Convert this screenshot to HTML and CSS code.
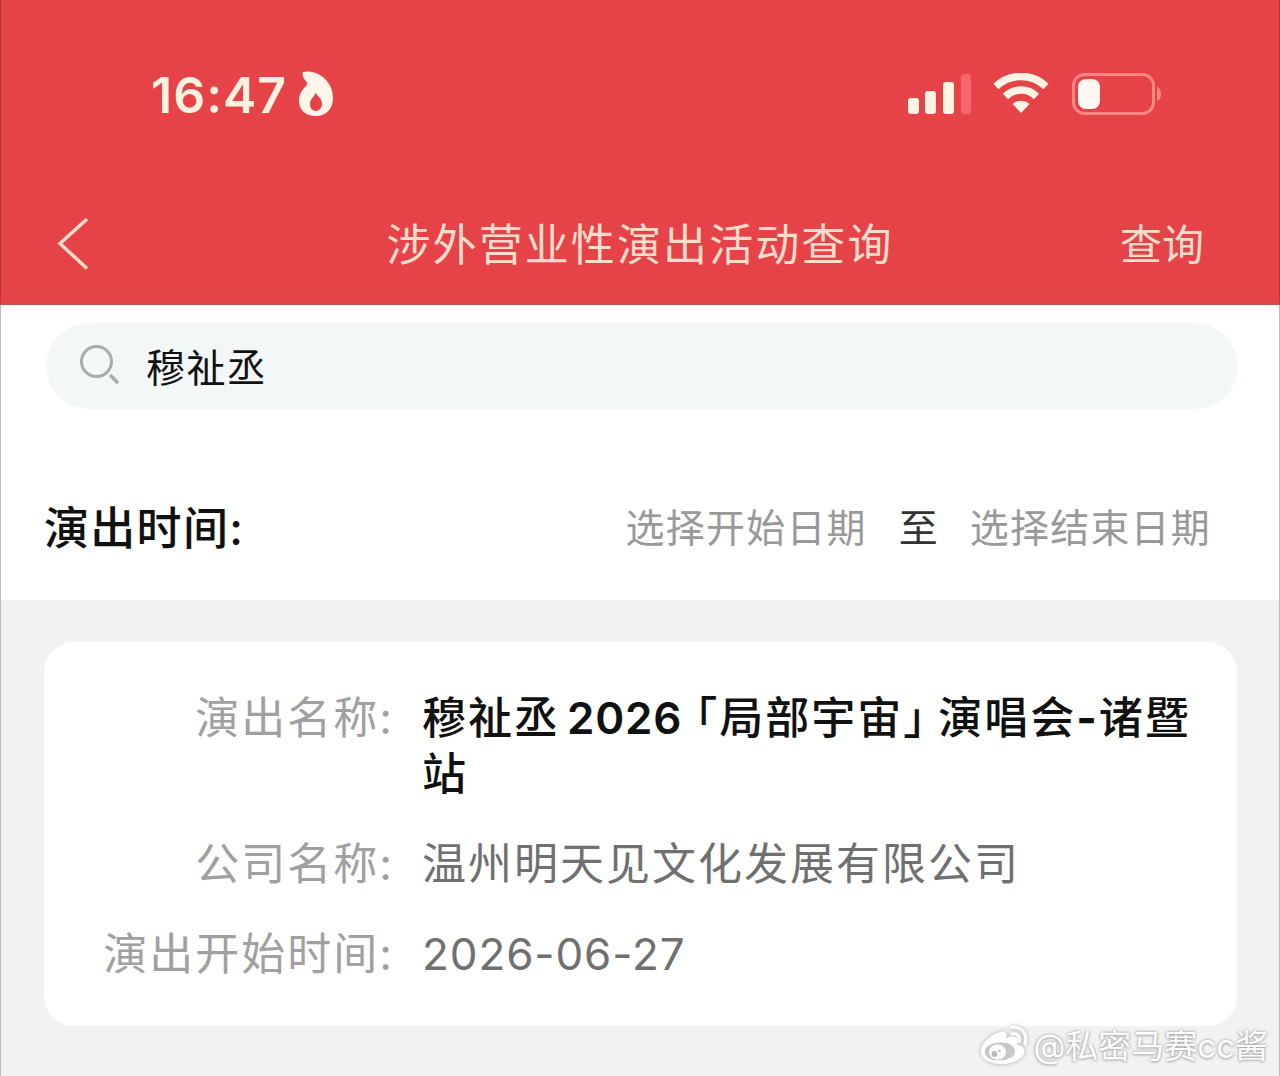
FILE: index.html
```html
<!DOCTYPE html>
<html lang="zh-CN">
<head>
    <meta charset="UTF-8">
    <meta name="viewport" content="width=device-width, initial-scale=1.0">
    <title>涉外营业性演出活动查询</title>
    <link rel="stylesheet" href="styles.css">
</head>
<body>

    <div class="page">
        <header class="header">
            <!-- Phone status bar -->
            <div class="status-bar">
                <div class="clock">
                    <span class="time">16:47</span>
                    <svg class="flame" width="38" height="48" viewBox="0 0 38 48">
                        <path fill="#fff6ea" fill-rule="evenodd" d="M6 2C18-1 36 9 36 28c0 11-7 18-17 18S2 40 2 31c0-7 3-11 7-15 2-2 1-4-1-6-2-3-3-5-2-8zM19 22c-1 4-6 7-6 12s3 7 6 7 6-3 6-7-2-6-4-8c-1-1-2-2-2-4z"/>
                    </svg>
                </div>
                <div class="indicators">
                    <svg class="signal" width="66" height="44" viewBox="0 0 66 44">
                        <g fill="#fff3e4">
                            <rect x="2" y="26" width="11" height="16" rx="3"/>
                            <rect x="19" y="19" width="11" height="23" rx="3"/>
                            <rect x="37" y="10" width="11" height="32" rx="3"/>
                        </g>
                        <rect x="55" y="2" width="10" height="40" rx="3" fill="#f8646b"/>
                    </svg>
                    <svg class="wifi" width="58" height="42" viewBox="0 0 58 42">
                        <g fill="none" stroke="#fff3e4" stroke-width="7.5">
                            <path d="M4 13.5a36 36 0 0 1 50 0"/>
                            <path d="M13.500 23.500a22 22 0 0 1 31 0"/>
                        </g>
                        <path fill="#fff3e4" d="M20.500 31a12.500 12.500 0 0 1 17 0L29 40z"/>
                    </svg>
                    <svg class="battery" width="92" height="44" viewBox="0 0 92 44">
                        <rect x="2.500" y="2.500" width="80" height="39" rx="11" fill="none" stroke="#fa8984" stroke-width="3"/>
                        <rect x="7" y="7" width="22" height="30" rx="8" fill="#fff8f2"/>
                        <path fill="#fa8984" d="M86 15c3 1 4 4 4 7s-1 6-4 7z"/>
                    </svg>
                </div>
            </div>

            <nav class="nav-bar">
                <svg class="back" width="34" height="56" viewBox="0 0 34 56">
                    <path d="M31 3L4 27.500l27 25" fill="none" stroke="#ffdccb" stroke-width="3.500"/>
                </svg>
                <h1>涉外营业性演出活动查询</h1>
                <span class="nav-action">查询</span>
            </nav>
        </header>

        <!-- Search and date filter -->
        <section class="filters">
            <div class="search-box">
                <svg width="42" height="42" viewBox="0 0 42 42" fill="none" stroke="#a9acac" stroke-width="3">
                    <circle cx="17.500" cy="17.500" r="15"/>
                    <path d="M31 31l8 8" stroke-width="3.500"/>
                </svg>
                <span>穆祉丞</span>
            </div>
            <div class="date-row">
                <span class="date-label">演出时间:</span>
                <div class="date-range">
                    <span>选择开始日期</span>
                    <span class="date-to">至</span>
                    <span>选择结束日期</span>
                </div>
            </div>
        </section>

        <!-- Result card -->
        <main class="results">
            <div class="card">
                <div class="label">演出名称:</div>
                <div class="value name"><span>穆祉丞</span><span class="year">2026</span><span class="bracket">「</span><span>局部宇宙</span><span class="bracket close">」</span><span>演唱会<b>-</b>诸暨</span><br><span>站</span></div>
                <div class="label">公司名称:</div>
                <div class="value">温州明天见文化发展有限公司</div>
                <div class="label">演出开始时间:</div>
                <div class="value date">2026-06-27</div>
            </div>
        </main>

        <div class="watermark">
            <svg width="50" height="42" viewBox="0 0 50 42">
                <path fill="#fff" fill-rule="evenodd" d="M21 7c4-2 7 1 5 6 6-3 13-2 12 3-1 3-1 3 1 4 12 4 4 19-18 19C8 39 0 33 1 25 2 17 13 8 21 7zM20 18c-9 0-15 4-15 9s6 9 15 8 15-5 14-10-6-8-14-7z"/>
                <ellipse cx="20" cy="26.500" rx="15" ry="9" fill="#c8c8c8"/>
                <ellipse cx="17.500" cy="27" rx="8.500" ry="7.500" fill="#fff"/>
                <circle cx="14.500" cy="29" r="3" fill="#bbb"/>
                <circle cx="19.500" cy="26" r="1.300" fill="#bbb"/>
                <path d="M32 9c5-1 9 3 7 8M31 2c10-1 17 6 14 17" fill="none" stroke="#fff" stroke-width="3" stroke-linecap="round"/>
            </svg>
            <span>@私密马赛cc酱</span>
        </div>
    </div>

</body>
</html>
```
FILE: styles.css
```css
/* General page styles */
* {
    box-sizing: border-box;
}

body {
    margin: 0;
    font-family: Inter, "Noto Sans CJK SC", sans-serif;
    background: #f2f2f2;
}

.page {
    position: relative;
    width: 1280px;
    height: 1076px;
    overflow: hidden;
    display: flex;
    flex-direction: column;
    box-shadow: inset 1px 0 #bdbdbd, inset -1px 0 #bdbdbd;
}

svg {
    display: block;
    flex: none;
}

/* Red header */
.header {
    height: 305px;
    padding: 64px 76px 0 56px;
    background: #e54348;
    border-bottom: 2px solid #b9565a;
    box-shadow: inset 1px 0 #b73539, inset -1px 0 #b73539;
}

.status-bar {
    height: 60px;
    padding: 0 41px 0 95px;
    display: flex;
    justify-content: space-between;
    align-items: center;
}

.clock,
.indicators {
    display: flex;
    align-items: center;
}

.time {
    padding-top: 2px;
    color: #fff0df;
    font-size: 50px;
    font-weight: 600;
    letter-spacing: 1px;
    line-height: 60px;
}

.flame {
    margin-left: 10px;
}

.wifi {
    margin-left: 20px;
}

.battery {
    margin-left: 21px;
}

.nav-bar {
    height: 60px;
    margin-top: 90px;
    display: flex;
    justify-content: space-between;
    align-items: center;
    color: #ffdccb;
}

.nav-bar h1 {
    margin: 2px 0 0 70px;
    font-size: 44px;
    font-weight: 400;
    letter-spacing: 2.1px;
    line-height: 60px;
}

.nav-action {
    padding-top: 2px;
    font-size: 42px;
    line-height: 60px;
}

/* Filters */
.filters {
    height: 295px;
    padding: 18px 42px 0 46px;
    background: #fff;
    box-shadow: inset 1px 0 #bdbdbd, inset -1px 0 #bdbdbd;
}

.search-box {
    height: 86px;
    padding: 0 0 2px 33px;
    border-radius: 43px;
    background: #f4f7f8;
    display: flex;
    align-items: center;
    gap: 25px;
    color: #111;
    font-size: 39px;
    letter-spacing: 1.4px;
}

.date-row {
    margin: 86px 0 0 -2px;
    padding-right: 27px;
    height: 60px;
    display: flex;
    justify-content: space-between;
    align-items: center;
}

.date-label {
    color: #111;
    font-size: 45px;
    font-weight: 500;
    letter-spacing: 1.3px;
}

.date-range {
    display: flex;
    gap: 32px;
    color: #999;
    font-size: 39px;
    letter-spacing: 1.2px;
}

.date-to {
    color: #333;
    letter-spacing: 0;
}

/* Results */
.results {
    padding: 42px 43px 0 44px;
}

.card {
    height: 384px;
    padding: 48px 40px 0 56px;
    border-radius: 30px;
    background: #fff;
    display: grid;
    grid-template-columns: 294px 1fr;
    align-content: start;
    column-gap: 28px;
    row-gap: 34px;
    font-size: 44px;
    letter-spacing: 2px;
    line-height: 56px;
}

.label {
    color: #a0a0a0;
    text-align: right;
}

.value {
    color: #707070;
}

.name {
    color: #111;
    font-weight: 500;
}

.year {
    margin: 0 13px 0 7px;
    font-weight: 600;
    letter-spacing: 0.8px;
}

.bracket {
    font-feature-settings: "halt";
}

.close {
    margin-right: 11px;
}

.date {
    letter-spacing: 0.9px;
}

/* Author mark over the bottom corner */
.watermark {
    position: absolute;
    right: 12px;
    bottom: 6px;
    display: flex;
    align-items: center;
    gap: 3px;
    color: #fff;
    font-size: 33px;
    line-height: 48px;
    text-shadow: 0 0 3px #999, 0 1px 3px #bbb;
}

.watermark svg {
    filter: drop-shadow(0 0 2px #aaa);
}
```
